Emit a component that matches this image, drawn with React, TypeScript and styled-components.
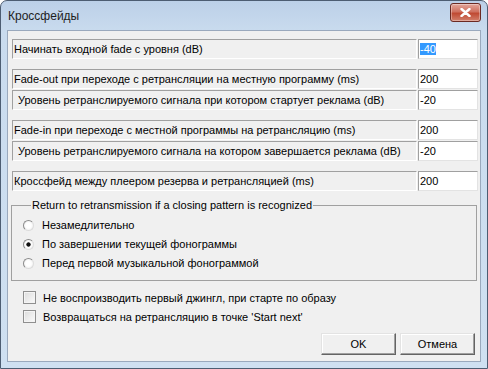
import React from 'react';
import styled, { createGlobalStyle } from 'styled-components';

const Global = createGlobalStyle`
    html, body { margin:0; padding:0; background:#fff; }
    body { font-family:"Liberation Sans", Arial, sans-serif; font-size:11px; color:#000; }
`

const Frame = styled.div`
    width:488px;
    height:369px;
    box-sizing:border-box;
    border:1px solid #4d5d72;
    border-radius:7px 7px 0 0;
    background:linear-gradient(#bcd0e8, #c9dbee 30px, #cfe0f1);
    padding:0 6px 6px 6px;
    display:flex;
    flex-direction:column;
`

const TitleBar = styled.div`
    height:29px;
    display:flex;
    align-items:center;
    justify-content:space-between;
    padding:0 0 0 1px;
    font-size:12px;
    color:#1e1e1e;
`

const CloseBtn = styled.div`
    width:29px;
    height:17px;
    margin:-6px 0 0 0;
    border:1px solid #6b2a23;
    border-radius:3px;
    background:linear-gradient(#e3a69b, #cf7160 45%, #c04a33 55%, #d2806c);
    box-shadow:inset 0 0 0 1px rgba(255,255,255,0.35);
    display:flex;
    align-items:center;
    justify-content:center;
`

const Client = styled.div`
    flex:1;
    background:#f0f0f0;
    border:1px solid #9aa9bd;
    padding:8px 2px 0 4px;
    display:flex;
    flex-direction:column;
`

const Section = styled.div`
    display:flex;
    flex-direction:column;
    gap:1px;
    margin-bottom:10px;
`

const Row = styled.div`
    display:flex;
    gap:1px;
    height:20px;
`

const Caption = styled.div<{ $indent?: boolean }>`
    width:405px;
    box-sizing:border-box;
    border:1px solid #a0a0a0;
    border-right-color:#fff;
    border-bottom-color:#fff;
    padding-left:${p => p.$indent ? '5px' : '1px'};
    display:flex;
    align-items:center;
    white-space:nowrap;
`

const Field = styled.div`
    width:60px;
    box-sizing:border-box;
    border:1px solid #a0a0a0;
    border-right-color:#e3e3e3;
    border-bottom-color:#e3e3e3;
    background:#fff;
    padding-left:1px;
    display:flex;
    align-items:center;
`

const Selected = styled.span`
    background:#3399ff;
    color:#fff;
`

const Group = styled.fieldset`
    margin:-2px 1px 0 -1px;
    padding:5px 0 8px 11px;
    border:1px solid #a0a0a0;
    display:flex;
    flex-direction:column;
    gap:1px;
    legend {
        padding:0 1px;
        margin-left:8px;
        color:#000;
    }
`

const Option = styled.label`
    display:flex;
    align-items:center;
    height:18px;
    gap:8px;
`

const Radio = styled.span<{ $on?: boolean }>`
    width:11px;
    height:11px;
    box-sizing:border-box;
    border-radius:50%;
    border:1px solid #8c8c8c;
    border-bottom-color:#dcdcdc;
    border-right-color:#dcdcdc;
    background:radial-gradient(circle at 50% 50%, ${p => p.$on ? '#111 0 1.8px,' : ''} #fff 2.5px, #e8e8e8);
`

const Checks = styled.div`
    display:flex;
    flex-direction:column;
    gap:6px;
    padding:10px 0 0 11px;
`

const Check = styled.label`
    display:flex;
    align-items:center;
    gap:7px;
    height:13px;
`

const Box = styled.span`
    width:13px;
    height:13px;
    box-sizing:border-box;
    border:1px solid #8f8f8f;
    background:linear-gradient(135deg, #dcdcdc, #fbfbfb);
    box-shadow:inset 0 0 0 1px #f4f4f4;
`

const Buttons = styled.div`
    display:flex;
    justify-content:flex-end;
    gap:4px;
    padding:10px 3px 0 0;
`

const Button = styled.button`
    width:75px;
    height:22px;
    box-sizing:border-box;
    font-family:"Liberation Sans", Arial, sans-serif;
    font-size:11px;
    color:#000;
    background:#f0f0f0;
    border:1px solid;
    border-color:#e3e3e3 #646464 #646464 #e3e3e3;
    box-shadow:inset -1px -1px 0 #a0a0a0, inset 1px 1px 0 #fff;
    padding:0;
`

type Param = { text: string, value: string, indent?: boolean, selected?: boolean }

const sections: Param[][] = [
    [{ text: 'Начинать входной fade с уровня (dB)', value: '-40', selected: true }],
    [
        { text: 'Fade-out при переходе с ретрансляции на местную программу (ms)', value: '200' },
        { text: 'Уровень ретранслируемого сигнала при котором стартует реклама (dB)', value: '-20', indent: true },
    ],
    [
        { text: 'Fade-in при переходе с местной программы на ретрансляцию (ms)', value: '200' },
        { text: 'Уровень ретранслируемого сигнала на котором завершается реклама (dB)', value: '-20', indent: true },
    ],
    [{ text: 'Кроссфейд между плеером резерва и ретрансляцией (ms)', value: '200' }],
]

const options = [
    'Незамедлительно',
    'По завершении текущей фонограммы',
    'Перед первой музыкальной фонограммой',
]

const App: React.FC = () => {
    return <>
        <Global />
        <Frame>
            <TitleBar>
                <span>Кроссфейды</span>
                <CloseBtn>
                    <svg width="11" height="9" viewBox="0 0 11 9">
                        <path d="M1.5 1 L9.5 8 M9.5 1 L1.5 8" stroke="#fff" strokeWidth="2.4" strokeLinecap="round" />
                    </svg>
                </CloseBtn>
            </TitleBar>
            <Client>
                {sections.map((rows, i) =>
                    <Section key={i}>
                        {rows.map(r =>
                            <Row key={r.text}>
                                <Caption $indent={r.indent}>{r.text}</Caption>
                                <Field>{r.selected ? <Selected>{r.value}</Selected> : r.value}</Field>
                            </Row>
                        )}
                    </Section>
                )}
                <Group>
                    <legend>Return to retransmission if a closing pattern is recognized</legend>
                    {options.map((o, i) =>
                        <Option key={o}>
                            <Radio $on={i === 1} />
                            {o}
                        </Option>
                    )}
                </Group>
                <Checks>
                    <Check><Box />Не воспроизводить первый джингл, при старте по образу</Check>
                    <Check><Box />Возвращаться на ретрансляцию в точке 'Start next'</Check>
                </Checks>
                <Buttons>
                    <Button>OK</Button>
                    <Button>Отмена</Button>
                </Buttons>
            </Client>
        </Frame>
    </>
}

export default App;
